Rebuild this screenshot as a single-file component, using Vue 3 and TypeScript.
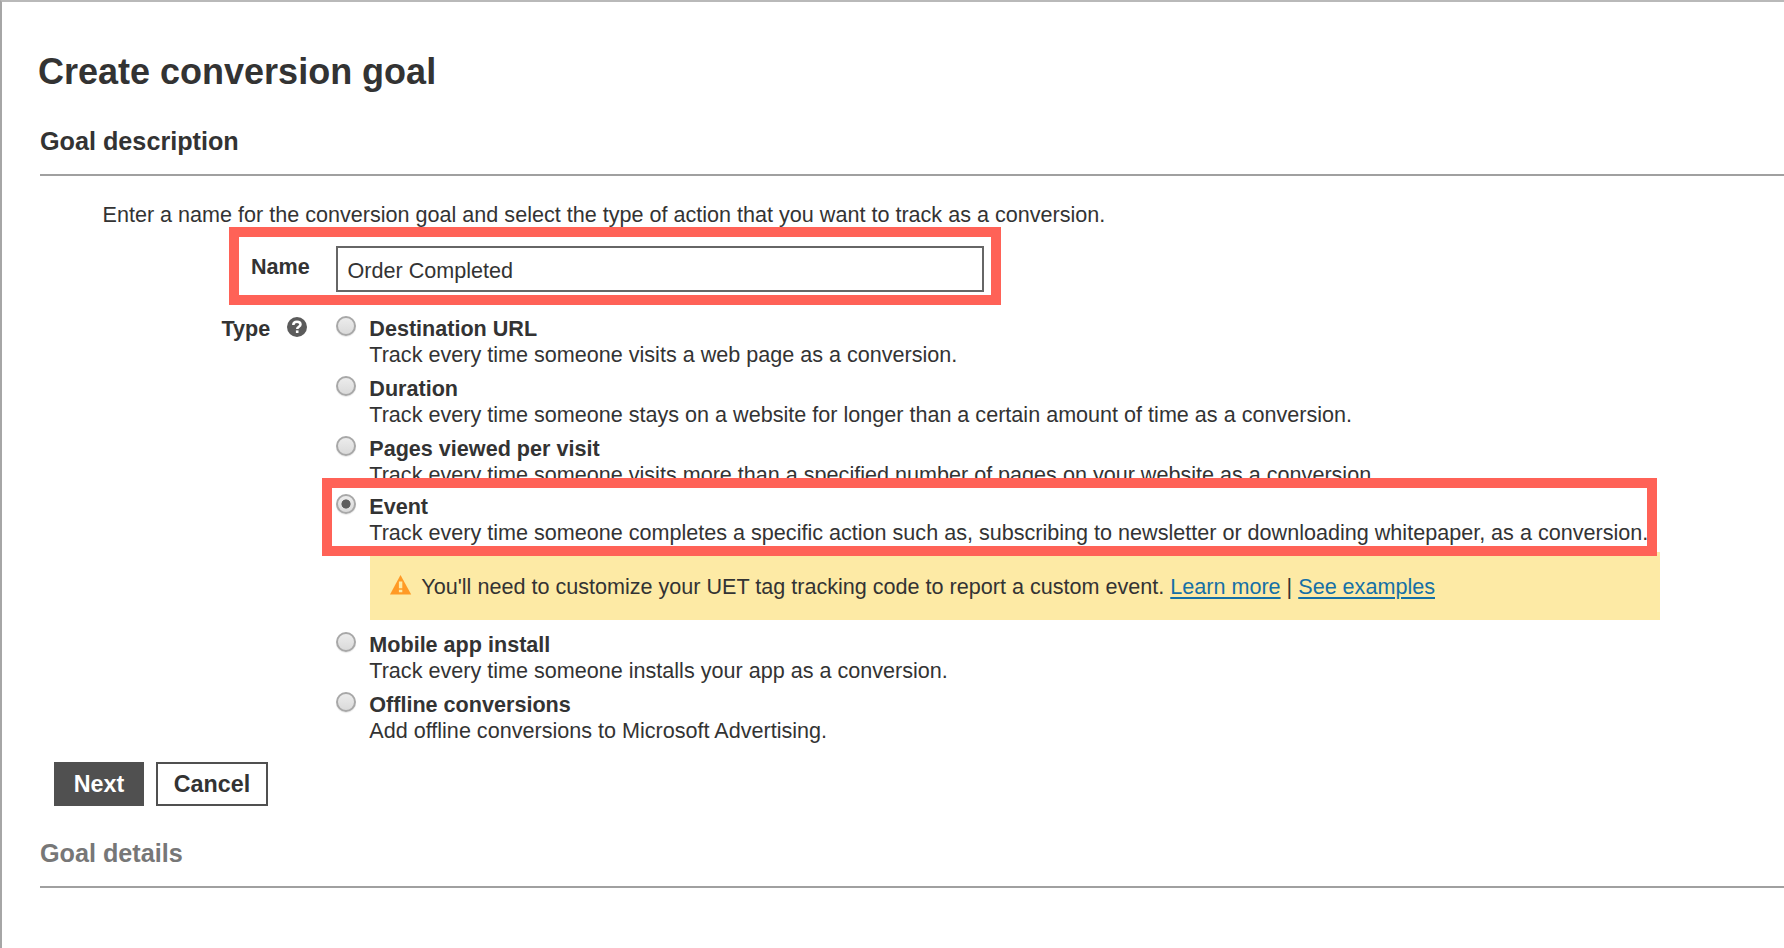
<script setup lang="ts">
import { ref } from 'vue'

interface GoalType {
  id: string
  title: string
  text: string
}

const goalTypes: GoalType[] = [
  { id: 'url', title: 'Destination URL', text: 'Track every time someone visits a web page as a conversion.' },
  { id: 'duration', title: 'Duration', text: 'Track every time someone stays on a website for longer than a certain amount of time as a conversion.' },
  { id: 'pages', title: 'Pages viewed per visit', text: 'Track every time someone visits more than a specified number of pages on your website as a conversion.' },
  { id: 'event', title: 'Event', text: 'Track every time someone completes a specific action such as, subscribing to newsletter or downloading whitepaper, as a conversion.' },
  { id: 'app', title: 'Mobile app install', text: 'Track every time someone installs your app as a conversion.' },
  { id: 'offline', title: 'Offline conversions', text: 'Add offline conversions to Microsoft Advertising.' },
]

const name = ref('Order Completed')
const selected = ref('event')
</script>

<template>
  <main class="page">
    <h1>Create conversion goal</h1>
    <section>
      <h2>Goal description</h2>
      <p class="intro">Enter a name for the conversion goal and select the type of action that you want to track as a conversion.</p>

      <div class="name-row">
        <label class="name-label" for="goal-name">Name</label>
        <input id="goal-name" v-model="name" class="name-input" type="text" />
        <span class="callout callout-name"></span>
      </div>

      <div class="type-row">
        <div class="type-label">
          <span>Type</span>
          <svg class="help" viewBox="0 0 20 20" width="20" height="20">
            <circle cx="10" cy="10" r="10" fill="#5b5b5b" />
            <path d="M6.3 8C6.300 5.600 7.800 4.700 10 4.700s3.500 1.100 3.500 2.900c0 2.200-3.300 2.200-3.300 4.500" fill="none" stroke="#fff" stroke-width="2.500" />
            <rect x="8.900" y="13.400" width="2.600" height="2.600" fill="#fff" />
          </svg>
        </div>
        <div class="options">
          <div v-for="g in goalTypes" :key="g.id" class="option" :class="g.id">
            <label class="choice">
              <input v-model="selected" class="radio" type="radio" name="goal-type" :value="g.id" />
              <span class="choice-text">
                <b>{{ g.title }}</b>
                <span>{{ g.text }}</span>
              </span>
            </label>
            <span v-if="g.id === 'event'" class="callout callout-event"></span>
            <div v-if="g.id === 'event'" class="notice">
              <svg class="warn" viewBox="0 0 22 20" width="22" height="20">
                <path d="M10.500 0L21.200 19.500H0Z" fill="#ff9a26" />
                <path d="M8.900 6.500h3.400v6.700h-3.400zM8.900 14.700h3.400v2.500h-3.400z" fill="#fdeaa5" />
              </svg>
              <span>You'll need to customize your UET tag tracking code to report a custom event. <a href="#">Learn more</a> | <a href="#">See examples</a></span>
            </div>
          </div>
        </div>
      </div>

      <div class="actions">
        <button class="btn primary" type="button">Next</button>
        <button class="btn" type="button">Cancel</button>
      </div>
    </section>
    <section>
      <h2 class="muted">Goal details</h2>
    </section>
  </main>
</template>

<style>
body {
  margin: 0;
  background: #fff;
  overflow: hidden;
}
</style>

<style scoped>
.page {
  box-sizing: border-box;
  height: 948px;
  border-top: 2px solid #b9b9b9;
  border-left: 2px solid #a6a6a6;
  padding: 49px 0 0 38px;
  overflow: hidden;
  font-family: "Liberation Sans", Arial, sans-serif;
  font-size: 21.58px;
  line-height: 26px;
  color: #333;
}
h1 {
  margin: 0 0 0 -2px;
  font-size: 36px;
  line-height: 42px;
}
h2 {
  margin: 0;
  padding: 33px 0 18px;
  border-bottom: 2px solid #a0a0a0;
  font-size: 25.2px;
  line-height: 30px;
}
.intro {
  margin: 0;
  padding: 26px 0 0 62.5px;
  white-space: nowrap;
}
.name-row {
  position: relative;
  display: flex;
  align-items: flex-start;
  padding-top: 19px;
  height: 46px;
  margin-top: -1px;
}
.name-label {
  width: 85px;
  padding: 8px 0 0 211px;
  font-weight: bold;
}
.name-input {
  box-sizing: border-box;
  width: 648px;
  height: 46px;
  border: 2px solid #666;
  border-radius: 0;
  padding: 4px 10px 0 9.5px;
  font: inherit;
  color: inherit;
  outline: none;
}
.callout {
  position: absolute;
  box-sizing: border-box;
  border: 10px solid #ff6257;
  pointer-events: none;
}
.callout-name {
  left: 189px;
  top: 0;
  width: 772px;
  height: 78px;
}
.type-row {
  display: flex;
  padding-top: 24px;
}
.type-label {
  display: flex;
  align-items: flex-start;
  gap: 16.5px;
  width: 114.5px;
  padding: 0 0 0 181.5px;
  font-weight: bold;
}
.type-label span {
  width: 49px;
}
.help {
  flex: none;
  margin-top: 0.5px;
}
.option {
  position: relative;
  height: 60px;
}
.option.pages {
  height: 58px;
}
.option.event {
  height: 138px;
}
.choice {
  display: flex;
  align-items: flex-start;
  gap: 13.3px;
}
.choice-text {
  display: flex;
  flex-direction: column;
  white-space: nowrap;
}
.radio {
  appearance: none;
  box-sizing: border-box;
  flex: none;
  width: 20px;
  height: 20px;
  margin: 0;
  border: 2px solid #a8a8a8;
  border-radius: 50%;
  background: linear-gradient(#ececec, #dadada);
  box-shadow: 0 1px 1px #e8e8e8;
}
.radio:checked {
  background: radial-gradient(circle, #5d5d5d 4.200px, transparent 4.900px), linear-gradient(#ececec, #dadada);
}
.callout-event {
  z-index: 1;
  left: -14px;
  top: -16px;
  width: 1335px;
  height: 78px;
}
.notice {
  box-sizing: border-box;
  display: flex;
  gap: 9.3px;
  width: 1290px;
  height: 68px;
  margin: 6px 0 0 34px;
  padding: 22px 0 0 20px;
  background: #fdeaa5;
  white-space: nowrap;
}
.warn {
  flex: none;
  margin-top: 1px;
}
a {
  color: #1570a6;
  text-decoration-thickness: 2px;
  text-underline-offset: 3px;
}
.actions {
  display: flex;
  gap: 12px;
  padding: 10px 0 0 14px;
}
.btn {
  box-sizing: border-box;
  width: 112px;
  height: 44px;
  border: 2px solid #505050;
  padding: 0;
  background: #fff;
  font: bold 23.3px/40px "Liberation Sans", Arial, sans-serif;
  color: #333;
}
.btn.primary {
  width: 90px;
  background: #505050;
  color: #fff;
}
.muted {
  padding-top: 32px;
  color: #777;
}
</style>
